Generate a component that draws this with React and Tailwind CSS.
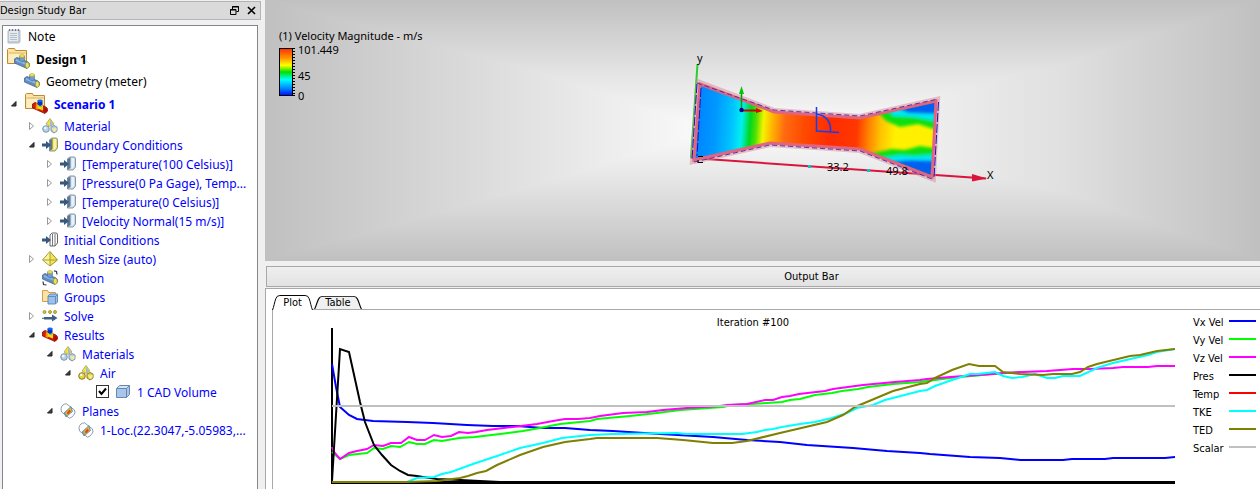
import { useState } from "react";

/* ---------- Tree icons ---------- */

function NoteIcon() {
  return (
    <svg width="16" height="18" viewBox="0 0 16 18">
      <path d="M3 3h11v12l-1 1H2V4z" fill="#c3cbd6" stroke="#b4bdc9" strokeWidth="1" />
      <path d="M3 4h9v10H3z" fill="#e6ebf1" />
      <path d="M4 6.500h7M4 8.500h7M4 10.500h7M4 12.500h7" stroke="#b4bdc9" strokeWidth="1" />
      <path d="M3.500 2v2M6.500 2v2M9.500 2v2M12.500 2v2" stroke="#6e7885" strokeWidth="1" />
    </svg>
  );
}

function Pipe({ hot }) {
  if (hot) {
    return (
      <g>
        <path d="M.5 5L3 3.500l11 4.500q2 1 1.500 4L13 14.500.5 9z" fill="#d81c00" stroke="#7a1408" strokeWidth=".8" />
        <path d="M4 4l2 .8v6L3.500 10z" fill="#ff8a00" />
        <path d="M5.500 4.500l5.500 2v5l-5.500-2z" fill="#ffd800" />
        <path d="M6 4.500h4.500l-.5 4-3-1z" fill="#58d850" />
        <path d="M5.500 1.500h5v4l-2.500 1.500-2.500-1.500z" fill="#0a28d0" />
        <ellipse cx="8" cy="1.800" rx="2.500" ry="1.300" fill="#1468f0" />
        <ellipse cx="13.300" cy="11.300" rx="1.800" ry="2.800" fill="#b00c0c" />
      </g>
    );
  }
  return (
    <g>
      <path d="M.5 5L3 3.500l11 4.500q2 1 1.500 4L13 14.500.5 9z" fill="#5f8fc6" stroke="#48678a" strokeWidth=".8" />
      <path d="M2 5l10 4v2L2 7z" fill="#8db5e2" />
      <path d="M5.500 2h5v4.500L8 8 5.500 6.500z" fill="#6d9cd2" stroke="#48678a" strokeWidth=".5" />
      <ellipse cx="8" cy="2" rx="2.600" ry="1.500" fill="#f2e24c" stroke="#a89a34" strokeWidth=".5" />
      <ellipse cx="13.300" cy="11.200" rx="2" ry="3" fill="#f2e24c" stroke="#8a8030" strokeWidth=".6" />
    </g>
  );
}

function GeometryIcon() {
  return (
    <svg width="16" height="16" viewBox="0 0 16 16">
      <Pipe />
    </svg>
  );
}

function ResultsIcon() {
  return (
    <svg width="16" height="16" viewBox="0 0 16 16">
      <Pipe hot />
    </svg>
  );
}

function FolderIcon({ hot }) {
  return (
    <svg width="24" height="24" viewBox="0 0 24 24">
      <path d="M1.500 2.500l1-1h6l1 2h11v13H1.500z" fill="#fbe3a4" stroke="#c08a34" />
      <path d="M2.500 6h17" stroke="#e0b566" />
      <path d="M3 7h16v9H3z" fill="#fdeebf" />
      <g transform="translate(8 7)">
        <Pipe hot={hot} />
      </g>
    </svg>
  );
}

function MaterialIcon({ gold }) {
  const fill = gold ? "#e6d23a" : "#b9d0e8";
  const stroke = gold ? "#7d6f18" : "#6d8ba8";
  return (
    <svg width="16" height="16" viewBox="0 0 16 16">
      <path d="M8 .5l4 5.500L8 8.500 4 6z" fill="#f0e04a" stroke="#a2973a" strokeWidth=".7" />
      <path d="M8 1.500l3 4.500L8 8z" fill="#9dbbe0" />
      <circle cx="4" cy="11" r="3.300" fill={fill} stroke={stroke} strokeWidth=".9" />
      <circle cx="3.300" cy="10" r="1.200" fill="#f5f9fd" />
      <path d="M9 9l3-1.500L15 9v4l-3 2-3-2z" fill={fill} stroke={stroke} strokeWidth=".9" />
      <path d="M9.500 9.500l2.500 1 2.500-1v3.200L12 14z" fill="#f4ec96" />
    </svg>
  );
}

function BoundaryIcon({ fill = "#c9dcef" }) {
  return (
    <svg width="16" height="16" viewBox="0 0 16 16">
      <path d="M7.500 3l2-2H14q1.500 0 1.500 2v8L13 14H7.500z" fill={fill} stroke="#7c8c9c" strokeWidth=".9" />
      <path d="M7.500 3l3-1.500V12l-3 2z" fill="#5f7890" />
      <path d="M11.500 2h2.500v9l-2 2h-.5z" fill="#fff" opacity=".6" />
      <path d="M0 6.500h4V4l5 4-5 4V9.500H0z" fill="#36587c" />
    </svg>
  );
}

function InitialIcon() {
  return (
    <svg width="16" height="16" viewBox="0 0 16 16">
      <path d="M8 3l2-2h4q1.500 0 1.500 2v8L13 14H8z" fill="#fff" stroke="#555" strokeWidth=".9" />
      <path d="M10.500 2v12M13 2v12" stroke="#666" strokeWidth=".9" />
      <path d="M0 6.500h4V4l5 4-5 4V9.500H0z" fill="#36587c" />
    </svg>
  );
}

function MeshIcon() {
  return (
    <svg width="16" height="16" viewBox="0 0 16 16">
      <path d="M8 .5L15.500 9 8 15 .5 9z" fill="#f2e654" stroke="#8f8420" strokeWidth=".9" />
      <path d="M8 1v13.500L1 9z" fill="#f9f3a0" />
      <path d="M8 1v14M1 9h14" stroke="#a0952c" strokeWidth=".9" />
    </svg>
  );
}

function MotionIcon() {
  return (
    <svg width="16" height="16" viewBox="0 0 16 16">
      <Pipe />
      <path d="M12 .8l2.500.7.5 3M1 11.500l.5 3 3 .5" fill="none" stroke="#2c3a48" strokeWidth="1.200" />
    </svg>
  );
}

function GroupsIcon() {
  return (
    <svg width="16" height="16" viewBox="0 0 16 16">
      <path d="M.5 1.500h5l1 2h7v9H.5z" fill="#fbe3a4" stroke="#cf9f50" />
      <path d="M6 7l2-2h7.500v8l-2 2H6z" fill="#9cc0ea" stroke="#5b86b8" strokeWidth=".9" />
      <path d="M6 7.500h7.500V15M13.500 7.500l2-2" fill="none" stroke="#5b86b8" strokeWidth=".9" />
    </svg>
  );
}

function SolveIcon() {
  return (
    <svg width="16" height="16" viewBox="0 0 16 16">
      <g fill="#d8c832" stroke="#827818" strokeWidth=".7">
        <circle cx="2.500" cy="4" r="1.500" />
        <circle cx="8" cy="4" r="1.500" />
        <circle cx="13" cy="4" r="1.500" />
      </g>
      <path d="M2 9h8V6.500L15.500 10 10 13.500V11.500H2z" fill="#3d5f88" />
      <path d="M0 10.300h2" stroke="#3d5f88" />
    </svg>
  );
}

function VolumeIcon() {
  return (
    <svg width="16" height="16" viewBox="0 0 16 16">
      <path d="M1.500 4.500l3-3h10v9l-3 3h-10z" fill="#a9c6e8" stroke="#6488b0" />
      <path d="M2 4.500l3-2.500h9l-2.500 2.500z" fill="#d3e3f5" />
      <path d="M11.500 4.500v9M2 4.500h9.500l3-3" fill="none" stroke="#6488b0" />
    </svg>
  );
}

function PlaneIcon() {
  return (
    <svg width="16" height="16" viewBox="0 0 16 16">
      <path d="M1 5.500Q2 1 6.500.8L14.500 7q1.500 3-1 5.500t-4 2.700L1.500 9z" fill="#fff" stroke="#7c91a6" strokeWidth=".9" />
      <path d="M4 10L11 3.500l1.500 5L6 14z" fill="#4aa8a8" stroke="#6c8296" strokeWidth=".7" />
      <path d="M5 10l5.500-5.500 1.300 4L7 12.500z" fill="#f2b632" />
      <path d="M6.500 10l3-3.500 1.500 2-3 3z" fill="#e24a18" />
    </svg>
  );
}

/* ---------- Tree ---------- */

const tree = [
  { label: "Note", icon: <NoteIcon />, black: true },
  {
    label: "Design 1",
    icon: <FolderIcon />,
    black: true,
    bold: true,
    children: [
      { label: "Geometry (meter)", icon: <GeometryIcon />, black: true },
      {
        label: "Scenario 1",
        icon: <FolderIcon hot />,
        bold: true,
        children: [
          { label: "Material", icon: <MaterialIcon />, closed: true },
          {
            label: "Boundary Conditions",
            icon: <BoundaryIcon fill="#f0de30" />,
            children: [
              { label: "[Temperature(100 Celsius)]", icon: <BoundaryIcon />, closed: true },
              { label: "[Pressure(0 Pa Gage), Temp...", icon: <BoundaryIcon />, closed: true },
              { label: "[Temperature(0 Celsius)]", icon: <BoundaryIcon />, closed: true },
              { label: "[Velocity Normal(15 m/s)]", icon: <BoundaryIcon />, closed: true },
            ],
          },
          { label: "Initial Conditions", icon: <InitialIcon /> },
          { label: "Mesh Size (auto)", icon: <MeshIcon />, closed: true },
          { label: "Motion", icon: <MotionIcon /> },
          { label: "Groups", icon: <GroupsIcon /> },
          { label: "Solve", icon: <SolveIcon />, closed: true },
          {
            label: "Results",
            icon: <ResultsIcon />,
            children: [
              {
                label: "Materials",
                icon: <MaterialIcon />,
                children: [
                  {
                    label: "Air",
                    icon: <MaterialIcon gold />,
                    children: [{ label: "1 CAD Volume", icon: <VolumeIcon />, check: true }],
                  },
                ],
              },
              {
                label: "Planes",
                icon: <PlaneIcon />,
                children: [{ label: "1-Loc.(22.3047,-5.05983,...", icon: <PlaneIcon /> }],
              },
            ],
          },
        ],
      },
    ],
  },
];

function Expander({ open, onClick, label }) {
  return (
    <button type="button" aria-label={`Toggle ${label}`} onClick={onClick} className="flex w-[18px] shrink-0 pl-1">
      <svg width="8" height="8" viewBox="0 0 8 8">
        {open ? (
          <path d="M6 1.500V6H1.500z" fill="#404040" stroke="#222" />
        ) : (
          <path d="M1.500 .5l4 3.500-4 3.500z" fill="#fff" stroke="#999" />
        )}
      </svg>
    </button>
  );
}

function CheckBox({ label }) {
  const [checked, setChecked] = useState(true);
  return (
    <span className="mr-1.5 grid shrink-0">
      <input
        type="checkbox"
        aria-label={label}
        checked={checked}
        onChange={() => setChecked(!checked)}
        className="col-start-1 row-start-1 size-[13px] appearance-none border border-[#333] bg-white"
      />
      {checked && (
        <svg width="13" height="13" viewBox="0 0 13 13" className="pointer-events-none col-start-1 row-start-1">
          <path d="M3 6l2.500 3L10 3.500" fill="none" stroke="#000" strokeWidth="2" />
        </svg>
      )}
    </span>
  );
}

function TreeNode({ node, depth }) {
  const [open, setOpen] = useState(true);
  const height = node.bold ? "h-[25px]" : depth < 2 ? "h-5" : "h-[19px]";
  const color = node.black ? "text-black" : "text-[#0000ff]";
  const expandable = node.children || node.closed;

  return (
    <li>
      <div className={`flex items-center whitespace-nowrap ${height} ${color} ${node.bold ? "font-bold" : ""}`}>
        {depth > 0 &&
          (expandable ? (
            <Expander open={open && !node.closed} onClick={() => setOpen(!open)} label={node.label} />
          ) : (
            <span className="w-[18px] shrink-0" />
          ))}
        {node.check && <CheckBox label={node.label} />}
        <span className="mr-1.5 shrink-0">{node.icon}</span>
        <span className="pt-0.5">{node.label}</span>
      </div>
      {node.children && open && (
        <ul className={depth > 0 ? "pl-[18px]" : ""}>
          {node.children.map((child, i) => (
            <TreeNode key={i} node={child} depth={depth + 1} />
          ))}
        </ul>
      )}
    </li>
  );
}

function StudyBar() {
  return (
    <aside className="flex w-[261px] shrink-0 flex-col pt-px">
      <header className="flex h-[19px] items-center border border-l-0 border-[#b4b4b4] bg-[#dadada] pr-1">
        <h1 className="flex-1 pt-0.5">Design Study Bar</h1>
        <button type="button" aria-label="Float" className="mr-2">
          <svg width="9" height="9" viewBox="0 0 9 9" fill="none" stroke="#000">
            <path d="M2.500 3V.5h6v5H6.500M2 1h7" />
            <path d="M.5 3.500h5.500v5H.5zM0 4h6" />
          </svg>
        </button>
        <button type="button" aria-label="Close">
          <svg width="9" height="9" viewBox="0 0 9 9">
            <path d="M1 1l7 7M8 1L1 8" stroke="#000" strokeWidth="1.600" />
          </svg>
        </button>
      </header>
      <nav className="mt-[5px] mr-[3px] ml-0.5 flex-1 border border-b-0 border-[#82878f] bg-white pl-[3px] font-['Noto_Sans','Open_Sans',sans-serif] text-xs">
        <ul>
          {tree.map((node, i) => (
            <TreeNode key={i} node={node} depth={0} />
          ))}
        </ul>
      </nav>
    </aside>
  );
}

/* ---------- 3D view ---------- */

const ticks = Array.from({ length: 16 }, (_, i) => i * 3 + 1);

function ColorScale() {
  return (
    <div className="absolute top-7 left-3.5">
      <p className="leading-4">(1) Velocity Magnitude - m/s</p>
      <div className="mt-[3px] flex">
        <svg width="17" height="50" viewBox="0 0 17 50" shapeRendering="crispEdges">
          <defs>
            <linearGradient id="scale" x1="0" y1="0" x2="0" y2="1">
              <stop offset="0" stopColor="#ff2a00" />
              <stop offset=".2" stopColor="#ff9000" />
              <stop offset=".36" stopColor="#ffff00" />
              <stop offset=".5" stopColor="#00e000" />
              <stop offset=".66" stopColor="#00ffff" />
              <stop offset=".85" stopColor="#0080ff" />
              <stop offset="1" stopColor="#0000ff" />
            </linearGradient>
          </defs>
          <rect x="0" y="1" width="13" height="48" fill="url(#scale)" />
          <path d="M.5 1v48M13 1v48" stroke="#000" />
          <path d="M0 1.500h16M0 48.500h16" stroke="#000" />
          {ticks.map((y) => (
            <path key={y} d={`M13 ${y + 0.5}h3`} stroke="#000" />
          ))}
        </svg>
        <div className="-mt-[3px] ml-0.5 flex flex-col leading-3">
          <span>101.449</span>
          <span className="mt-3.5">45</span>
          <span className="mt-2">0</span>
        </div>
      </div>
    </div>
  );
}

const duct = "M700 84L774 112L860 118L936 101L932 177L860 149L770 143L694 160Z";

function FlowModel() {
  return (
    <svg width="600" height="261" viewBox="463 0 600 261" className="max-w-full" fontSize="11">
      <defs>
        <linearGradient id="flow" gradientUnits="userSpaceOnUse" x1="696" y1="122" x2="936" y2="138">
          <stop offset="0" stopColor="#0084ff" />
          <stop offset=".08" stopColor="#0098ff" />
          <stop offset=".15" stopColor="#00c4ff" />
          <stop offset=".19" stopColor="#00f0f0" />
          <stop offset=".225" stopColor="#00d820" />
          <stop offset=".25" stopColor="#50e000" />
          <stop offset=".28" stopColor="#f4f400" />
          <stop offset=".32" stopColor="#ffb000" />
          <stop offset=".37" stopColor="#ff6a10" />
          <stop offset=".45" stopColor="#ff4a00" />
          <stop offset=".56" stopColor="#ff2c00" />
          <stop offset=".67" stopColor="#ff3800" />
          <stop offset=".72" stopColor="#ff8400" />
          <stop offset=".77" stopColor="#ffc400" />
          <stop offset=".83" stopColor="#fff000" />
          <stop offset="1" stopColor="#fff000" />
        </linearGradient>
        <clipPath id="inside">
          <path d={duct} />
        </clipPath>
        <filter id="soft">
          <feGaussianBlur stdDeviation="1.500" />
        </filter>
      </defs>

      {/* axes behind the part */}
      <path d="M697.500 64L691 158" stroke="#30cc30" strokeWidth="2" />
      <path d="M706 159L986 178.500" stroke="#dc143c" strokeWidth="2" />
      <path d="M972 174l15 4.500-15 3z" fill="#dc143c" />

      <path d={duct} fill="none" stroke="#d98a98" strokeOpacity=".5" strokeWidth="8" />
      <path d={duct} fill="url(#flow)" />
      <g clipPath="url(#inside)">
        <g filter="url(#soft)">
          <path d="M874 108L886 121L900 127L918 124L940 131V95z" fill="#10e010" />
          <path d="M886 106L893 116L914 117L940 122V95z" fill="#00e8f0" />
          <path d="M890 104L908 113L940 114V95z" fill="#0060f0" />
          <path d="M868 154L892 149L905 150L920 146L940 149V184z" fill="#10e010" />
          <path d="M880 158L900 155L915 156L940 154V184z" fill="#00e8f0" />
          <path d="M888 162L908 160L940 161V184z" fill="#0060f0" />
        </g>
      </g>
      <path d={duct} fill="none" stroke="#e0667e" strokeWidth="3" />
      <path d="M697 83L774 110L860 116L938 99" fill="none" stroke="#3018b8" strokeOpacity=".8" strokeDasharray="5 3" />
      <path d="M694 162L770 145L860 151L932 179" fill="none" stroke="#3018b8" strokeOpacity=".8" strokeDasharray="5 3" />
      <path d="M938.500 102L934 178M697 84L692 160M701 88L697 156" fill="none" stroke="#2010c8" strokeDasharray="9 2" />

      {/* local triad */}
      <path d="M741.500 110V92" stroke="#00a000" strokeWidth="1.500" />
      <path d="M739 94l2.500-8 2.500 8z" fill="#00c800" />
      <path d="M741 110.500h17" stroke="#d00000" strokeWidth="2" />
      <path d="M756 108l7 3-7 2z" fill="#e80000" />
      <circle cx="741.500" cy="110" r="2.200" fill="#000090" />

      {/* plane handle */}
      <path d="M816.500 107V131L839 132.500M817 114C827 116 831 122 830.500 131" fill="none" stroke="#1040f0" strokeWidth="1.500" />

      <path d="M698 156.500h5M698 162.500h5M698 160v3" stroke="#000" fill="none" />
      <rect x="808" y="165" width="3" height="3" fill="#00c8c8" />
      <rect x="867" y="169" width="3" height="3" fill="#00c8c8" />
      <text x="697" y="62">y</text>
      <text x="827" y="171">33.2</text>
      <text x="886" y="175">49.8</text>
      <text x="987" y="179">X</text>
    </svg>
  );
}

function Viewport() {
  return (
    <section className="relative flex justify-center bg-[linear-gradient(to_right,#c0c0c0,#e0e0e0_25%,#fbfbfb_45%,#fbfbfb_55%,#e0e0e0_80%,#c0c0c0),linear-gradient(to_bottom,#c0c0c0,#e4e4e4_28%,#fbfbfb_50%,#e4e4e4_70%,#c0c0c0)] bg-blend-darken font-['Noto_Sans',sans-serif]">
      <ColorScale />
      <FlowModel />
    </section>
  );
}

/* ---------- Output bar ---------- */

const series = [
  {
    name: "Vx Vel",
    color: "#0000ff",
    points:
      "332,364 336,387 340,407 349,415 357,419 373,421 407,422 433,423 467,425 493,426 517,426 543,428 565,428 590,430 613,431 660,434 713,437 747,440 780,442 807,445 853,448 887,451 920,453 930,454 970,457 1000,458 1020,460 1063,460 1072,459 1105,459 1113,458 1165,458 1175,457",
  },
  {
    name: "Vy Vel",
    color: "#00ff00",
    points:
      "332,452 340,459 349,455 367,453 374,448 383,449 391,446 400,447 409,442 417,444 425,444 434,440 442,441 459,438 475,437 500,434 523,431 545,427 560,424 590,421 597,419 630,416 657,413 680,410 723,407 732,405 767,403 782,402 790,400 800,399 815,395 832,393 842,391 858,389 868,387 893,384 920,382 950,378 993,374 1020,372",
  },
  {
    name: "Vz Vel",
    color: "#ff00ff",
    points:
      "332,447 334,452 340,459 349,453 357,451 367,449 374,445 383,446 391,443 401,443 409,437 417,440 425,440 434,435 442,437 451,436 459,432 468,433 476,432 487,430 513,427 537,424 553,421 565,419 578,419 590,418 600,416 623,413 647,412 663,410 687,408 720,406 727,405 747,404 765,400 773,400 782,397 790,396 799,394 825,391 833,389 863,385 895,382 920,380 927,379 950,377 993,374 1003,373 1023,372 1047,371 1073,369 1090,369 1113,368 1123,367 1148,367 1157,366 1175,366",
  },
  {
    name: "Pres",
    color: "#000000",
    points:
      "332,481 340,349 349,352 360,402 365,422 374,445 382,455 391,465 400,471 408,475 417,476 423,477 437,479 460,480 500,482",
  },
  { name: "Temp", color: "#ff0000", points: "" },
  {
    name: "TKE",
    color: "#00ffff",
    points:
      "407,482 417,478 434,477 442,474 451,472 473,464 500,455 520,448 543,443 562,438 590,435 613,434 677,433 687,434 742,434 757,432 765,430 773,429 782,427 800,424 815,422 832,418 847,413 857,408 873,405 885,400 920,391 927,390 935,386 952,380 970,374 978,374 995,372 1003,376 1012,378 1022,377 1035,374 1047,378 1055,378 1063,376 1080,376 1097,368 1113,363 1148,355 1157,352 1175,349",
  },
  {
    name: "TED",
    color: "#808000",
    points:
      "332,482 407,482 437,481 460,478 468,476 477,473 486,471 497,465 520,455 543,447 565,442 590,439 597,438 657,438 683,440 713,443 732,443 747,441 780,433 827,422 843,415 855,407 893,391 920,384 927,383 935,378 952,370 969,364 979,366 995,366 1003,372 1020,374 1043,375 1053,374 1072,374 1080,372 1088,367 1097,364 1130,356 1140,355 1157,351 1175,349",
  },
  { name: "Scalar", color: "#c0c0c0", points: "332,406 1175,406" },
];

function Plot() {
  return (
    <div className="flex pt-[7px] pl-[58px]">
      <figure className="min-w-0 flex-1">
        <figcaption className="text-center leading-[11px]">Iteration #100</figcaption>
        <svg viewBox="331 328 844 161" preserveAspectRatio="none" className="block h-[161px] w-full">
          <path d="M332 328V484" stroke="#000" strokeWidth="2" />
          <path d="M331 482.500H1175" stroke="#000" strokeWidth="3" />
          {series.map((s) => (
            <polyline key={s.name} points={s.points} fill="none" stroke={s.color} strokeWidth="2" />
          ))}
        </svg>
      </figure>
      <ul className="ml-[18px] w-[67px] shrink-0">
        {series.map((s) => (
          <li key={s.name} className="flex h-[18px] items-start leading-[11px]">
            <span className="w-9">{s.name}</span>
            <svg width="27" height="10" viewBox="0 0 27 10">
              <path d="M0 4h27" stroke={s.color} strokeWidth="2" />
            </svg>
          </li>
        ))}
      </ul>
    </div>
  );
}

function Tab({ label, active, onClick }) {
  return (
    <button
      type="button"
      role="tab"
      aria-selected={active}
      onClick={onClick}
      className={`relative flex items-end justify-center leading-3 ${active ? "-mb-px h-[15px] w-[41px] pb-px" : "h-[13px] w-12"}`}
    >
      <svg
        viewBox="0 0 42 15"
        preserveAspectRatio="none"
        className="absolute inset-0 size-full"
        fill={active ? "#fff" : "#f0f0f0"}
        stroke="#000"
      >
        <path d="M.5 15C2 12 2.500 7 4 3.500Q5 .5 8 .5H34Q37 .5 38 3.500C39.500 7 40 12 41.500 15" />
      </svg>
      <span className="relative">{label}</span>
    </button>
  );
}

function OutputPanel() {
  const [tab, setTab] = useState("Plot");
  return (
    <section className="mt-px flex flex-1 flex-col border-t border-l border-[#a8a8a8] bg-white pt-1.5 pl-1.5">
      <div role="tablist" className="flex items-end gap-px">
        <Tab label="Plot" active={tab === "Plot"} onClick={() => setTab("Plot")} />
        <Tab label="Table" active={tab === "Table"} onClick={() => setTab("Table")} />
      </div>
      <div role="tabpanel" className="flex-1 border-t border-l border-[#a8a8a8]">
        {tab === "Plot" && <Plot />}
      </div>
    </section>
  );
}

export default function App() {
  return (
    <div className="flex min-h-screen bg-[#f0f0f0] font-['DejaVu_Sans_Condensed','DejaVu_Sans',sans-serif] text-[11px] text-black">
      <StudyBar />
      <main className="ml-1 flex min-w-0 flex-1 flex-col">
        <Viewport />
        <h2 className="mt-[5px] ml-px flex h-[21px] items-center justify-center border border-r-0 border-[#a8a8a8] bg-linear-to-b from-[#efefef] to-[#e2e2e2] pt-0.5 pl-24">
          Output Bar
        </h2>
        <OutputPanel />
      </main>
    </div>
  );
}
